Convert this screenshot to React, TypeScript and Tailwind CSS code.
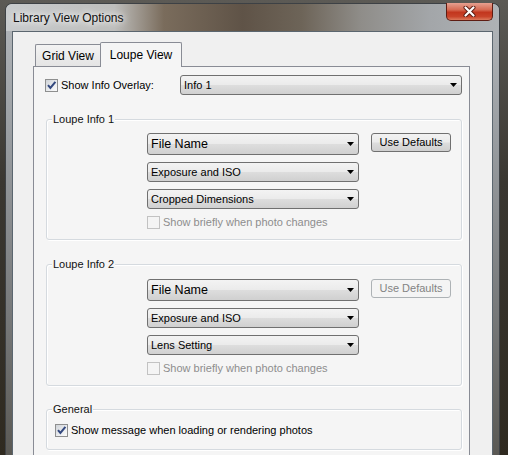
import React from "react";

const Check = ({ checked, disabled }: { checked?: boolean; disabled?: boolean }) => (
  <span
    className={`flex h-[13px] w-[13px] shrink-0 items-center justify-center border ${
      disabled
        ? "border-[#c2c2c2] bg-[#f4f4f4]"
        : "border-[#8e8f8f] bg-[linear-gradient(135deg,#cfd3d8_0%,#eceef0_60%,#fafafa_100%)]"
    }`}
  >
    {checked && (
      <svg width="11" height="11" viewBox="0 0 11 11">
        <path d="M2 5.2 4.4 8 9.4 1.8" fill="none" stroke="#34497f" strokeWidth="2" />
      </svg>
    )}
  </span>
);

const Combo = ({ label, big, className }: { label: string; big?: boolean; className?: string }) => (
  <div
    className={`flex items-center justify-between rounded-[3px] border border-[#707070] bg-[linear-gradient(180deg,#f3f3f3_0%,#ebebeb_48%,#dddddd_52%,#d0d0d0_100%)] pl-[3px] pr-[4px] ${className}`}
  >
    <span className={big ? "text-[12.5px]" : "text-[11px]"}>{label}</span>
    <svg width="7" height="4" viewBox="0 0 7 4">
      <path d="M0 0h7L3.5 4z" fill="#000" />
    </svg>
  </div>
);

const Group = ({ title, className, children }: { title: string; className?: string; children: React.ReactNode }) => (
  <div className={`relative rounded-[3px] border border-[#d5dadf] shadow-[inset_1px_1px_0_#fff,1px_1px_0_#fff] ${className}`}>
    <span className="absolute left-[5px] top-[-8px] bg-[#f5f5f5] px-[1px] leading-[14px] text-[#111]">{title}</span>
    {children}
  </div>
);

const LoupeInfo = ({ title, third, enabled, className }: { title: string; third: string; enabled?: boolean; className?: string }) => (
  <Group title={title} className={`flex pb-[10px] pl-[100px] ${className}`}>
    <div className="flex w-[212px] flex-col">
      <Combo label="File Name" big className="h-[22px]" />
      <Combo label="Exposure and ISO" className="mt-[7px] h-[20px]" />
      <Combo label={third} className="mt-[7px] h-[20px]" />
      <div className="mt-[7px] flex h-[13px] items-center gap-[3px] text-[#8d8d8d]">
        <Check disabled />
        <span>Show briefly when photo changes</span>
      </div>
    </div>
    <div
      className={`ml-[12px] flex h-[19px] w-[80px] items-center justify-center rounded-[3px] border ${
        enabled
          ? "border-[#707070] bg-[linear-gradient(180deg,#f2f2f2_0%,#ebebeb_48%,#dddddd_52%,#cfcfcf_100%)] text-black"
          : "border-[#adb2b5] bg-[#f4f4f4] text-[#838383]"
      }`}
    >
      Use Defaults
    </div>
  </Group>
);

export default function App() {
  return (
    <div className="h-[455px] w-[508px] overflow-hidden bg-[linear-gradient(180deg,#5c5a55_0%,#3a3731_40%,#2f2a20_100%)] pl-[5px] pt-[3px] font-['Liberation_Sans',Arial,sans-serif] text-[11px] text-black">
      <div className="w-[495px] rounded-t-[7px] border border-b-0 border-[#3d4145] bg-[linear-gradient(180deg,#b3b7bb_0%,#979b9f_30%,#77797a_65%,#55534d_100%)]">
        <div className="flex h-[27px] items-center justify-between rounded-t-[6px] bg-[linear-gradient(90deg,#c8cbcd_0%,#bebebc_22%,#7a6c5c_32%,#5f5347_48%,#6d6458_60%,#8f8d89_72%,#a3a6a9_86%,#aeb2b5_100%)]">
          <span className="ml-[7px] text-[12px] leading-[14px] text-[#111] [text-shadow:0_0_6px_#fff,0_0_10px_#fff]">
            Library View Options
          </span>
          <div className="-mt-px mr-[6px] flex h-[18px] w-[47px] items-center justify-center self-start rounded-b-[5px] border border-t-0 border-[#5e1c12] bg-[linear-gradient(180deg,#e6a090_0%,#d66a52_40%,#c2361e_55%,#c9442a_80%,#dc7a5c_100%)]">
            <svg width="13" height="11" viewBox="0 0 13 11">
              <path d="M2.5 1.5 10.5 9.5M10.5 1.5 2.5 9.5" stroke="#5a1a10" strokeWidth="4" strokeLinecap="round" />
              <path d="M2.5 1.5 10.5 9.5M10.5 1.5 2.5 9.5" stroke="#fff" strokeWidth="2.2" strokeLinecap="round" />
            </svg>
          </div>
        </div>

        <div className="mx-[6px] border border-b-0 border-[#5b666f] bg-[#f0f0f0] pl-[20px] pt-[10px]">
          <div className="flex items-end pl-[2px] text-[12px]">
            <div className="flex h-[22px] w-[65px] items-center justify-center rounded-tl-[2px] border-l border-t border-[#898c95] bg-[linear-gradient(180deg,#f3f3f3_0%,#e4e4e4_100%)]">
              Grid View
            </div>
            <div className="relative z-10 -mb-px flex h-[25px] w-[82px] items-center justify-center rounded-t-[2px] border-x border-t border-[#898c95] bg-[#f5f5f5]">
              Loupe View
            </div>
          </div>

          <div className="w-[437px] border border-[#898c95] bg-[#f5f5f5] pb-[30px] pl-[12px] pr-[7px] pt-[8px]">
            <div className="flex h-[20px] items-center">
              <div className="-ml-px flex w-[135px] items-center gap-[3px]">
                <Check checked />
                <span>Show Info Overlay:</span>
              </div>
              <Combo label="Info 1" className="h-[20px] flex-1" />
            </div>

            <LoupeInfo title="Loupe Info 1" third="Cropped Dimensions" enabled className="mt-[24px] pt-[13px]" />
            <LoupeInfo title="Loupe Info 2" third="Lens Setting" className="mt-[24px] pt-[14px]" />

            <Group title="General" className="mt-[23px] flex items-center gap-[3px] pb-[10px] pl-[8px] pt-[12px]">
              <Check checked />
              <span>Show message when loading or rendering photos</span>
            </Group>
          </div>
        </div>
      </div>
    </div>
  );
}
